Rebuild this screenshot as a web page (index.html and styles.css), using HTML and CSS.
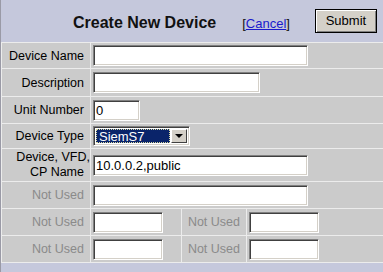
FILE: index.html
```html
<!DOCTYPE html>
<html lang="en">
<head>
    <meta charset="UTF-8">
    <meta name="viewport" content="width=device-width, initial-scale=1.0">
    <title>Create New Device</title>
    <link rel="stylesheet" href="styles.css">
</head>
<body>
    <div class="page">
        <div class="header">
            <h1 class="title">Create New Device</h1>
            <span class="cancel">[<a href="#">Cancel</a>]</span>
            <button class="submit">Submit</button>
        </div>

        <div class="form">
            <label class="label">Device Name</label>
            <div class="field span3"><input type="text" class="input w-long"></div>

            <label class="label">Description</label>
            <div class="field span3"><input type="text" class="input w-mid"></div>

            <label class="label">Unit Number</label>
            <div class="field span3"><input type="text" class="input w-unit" value="0"></div>

            <label class="label">Device Type</label>
            <div class="field span3">
                <div class="select">
                    <span class="select-value">SiemS7</span>
                    <span class="select-arrow"></span>
                </div>
            </div>

            <label class="label two-line"><span class="overhang">Device, VFD,</span><br>CP Name</label>
            <div class="field span3"><input type="text" class="input w-long" value="10.0.0.2,public"></div>

            <label class="label muted">Not Used</label>
            <div class="field span3"><input type="text" class="input w-long"></div>

            <label class="label muted">Not Used</label>
            <div class="field"><input type="text" class="input w-short"></div>
            <label class="label muted">Not Used</label>
            <div class="field"><input type="text" class="input w-short"></div>

            <label class="label muted">Not Used</label>
            <div class="field"><input type="text" class="input w-short"></div>
            <label class="label muted">Not Used</label>
            <div class="field"><input type="text" class="input w-short"></div>
        </div>

        <div class="footer"></div>
    </div>
</body>
</html>
```

FILE: styles.css
```css
body {
    margin: 0;
    font-family: "Liberation Sans", Arial, sans-serif;
    font-size: 12.5px;
    background-color: #c5c8dc;
}
.page {
    border-left: 1px solid #9a9aa6;
    min-height: 272px;
    box-sizing: border-box;
}
.header {
    height: 42px;
    display: flex;
    align-items: center;
}
.title {
    margin: 4px 0 0 72px;
    font-size: 16px;
    font-weight: bold;
    color: #111;
}
.cancel {
    margin: 4px 0 0 26px;
    font-size: 13px;
    color: #111;
}
.cancel a {
    color: #1a1acc;
}
.submit {
    margin: -1px 0 0 25px;
    width: 62px;
    height: 24px;
    padding: 0;
    font-family: "Liberation Sans", Arial, sans-serif;
    font-size: 13px;
    color: #000;
    background-color: #d4d0c8;
    border: 1px solid #000;
    box-shadow: inset 1px 1px 0 #fff, inset -1px -1px 0 #808080;
}
.form {
    display: grid;
    grid-template-columns: 88px 90px 64px 1fr;
    grid-template-rows: 25px 27px 26px 24px 32px 26px 26px 26px;
    gap: 1px;
    padding: 1px 0 1px 1px;
    background-color: #ececec;
}
.label {
    display: flex;
    align-items: center;
    justify-content: flex-end;
    padding-right: 6px;
    background-color: #cbcbcb;
    color: #000;
    text-align: right;
}
.two-line {
    display: block;
    padding-top: 1px;
    line-height: 15px;
}
.overhang {
    margin-right: -6px;
}
.muted {
    color: #8a8a8a;
}
.field {
    display: flex;
    align-items: center;
    padding-left: 2px;
    background-color: #cbcbcb;
}
.span3 {
    grid-column: span 3;
}
.input {
    box-sizing: border-box;
    height: 21px;
    padding: 0 2px;
    font-family: "Liberation Sans", Arial, sans-serif;
    font-size: 13px;
    color: #000;
    background-color: #fff;
    border: 1px solid;
    border-color: #808080 #fff #fff #808080;
    box-shadow: inset 1px 1px 0 #404040, inset -1px -1px 0 #d4d0c8;
    outline: none;
}
.w-long {
    width: 215px;
}
.w-mid {
    width: 167px;
}
.w-unit {
    width: 47px;
}
.w-short {
    width: 70px;
}
.select {
    box-sizing: border-box;
    width: 97px;
    height: 20px;
    display: flex;
    align-items: center;
    padding: 2px;
    gap: 1px;
    background-color: #fff;
    border: 1px solid;
    border-color: #808080 #fff #fff #808080;
    box-shadow: inset 1px 1px 0 #404040, inset -1px -1px 0 #d4d0c8;
}
.select-value {
    flex: 1;
    height: 100%;
    box-sizing: border-box;
    padding-left: 2px;
    line-height: 14px;
    font-size: 13px;
    color: #fff;
    background-color: #0a246a;
    border: 1px dotted #d8d8a0;
}
.select-arrow {
    width: 16px;
    height: 100%;
    box-sizing: border-box;
    display: flex;
    align-items: center;
    justify-content: center;
    background-color: #d4d0c8;
    border: 1px solid;
    border-color: #fff #404040 #404040 #fff;
}
.select-arrow::after {
    content: "";
    border-left: 4px solid transparent;
    border-right: 4px solid transparent;
    border-top: 4px solid #000;
}
.footer {
    height: 9px;
}
```
